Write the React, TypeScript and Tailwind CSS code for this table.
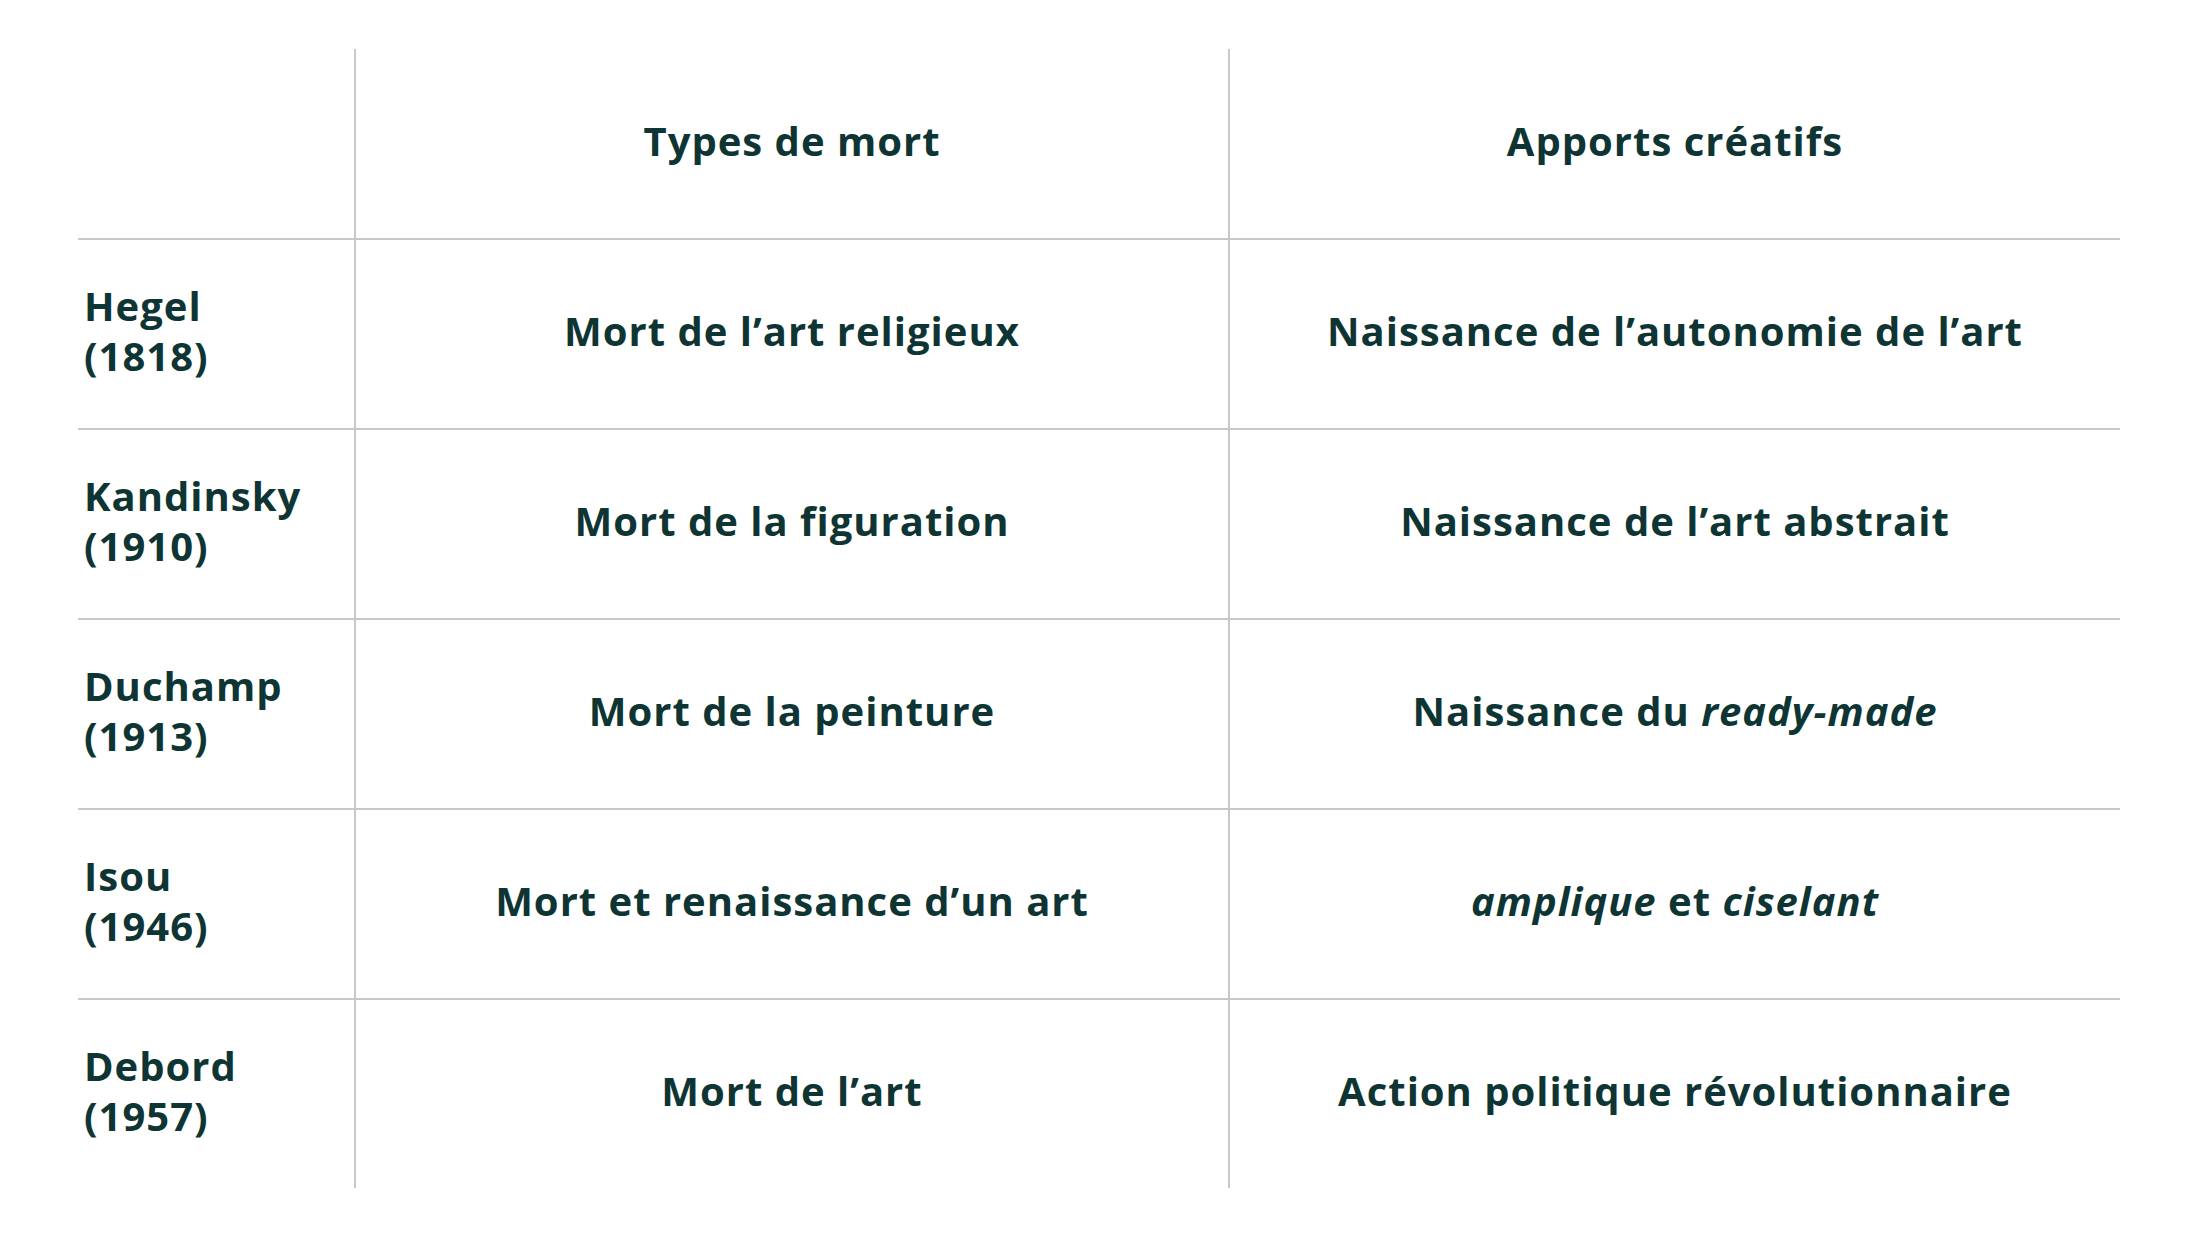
import React from "react";

type Row = { name: string; year: string; mort: React.ReactNode; apport: React.ReactNode };

const rows: Row[] = [
  { name: "Hegel", year: "(1818)", mort: "Mort de l’art religieux", apport: "Naissance de l’autonomie de l’art" },
  { name: "Kandinsky", year: "(1910)", mort: "Mort de la figuration", apport: "Naissance de l’art abstrait" },
  {
    name: "Duchamp",
    year: "(1913)",
    mort: "Mort de la peinture",
    apport: (
      <>
        Naissance du <em className="italic">ready-made</em>
      </>
    ),
  },
  {
    name: "Isou",
    year: "(1946)",
    mort: "Mort et renaissance d’un art",
    apport: (
      <>
        <em className="italic">amplique</em> et <em className="italic">ciselant</em>
      </>
    ),
  },
  { name: "Debord", year: "(1957)", mort: "Mort de l’art", apport: "Action politique révolutionnaire" },
];

export default function App() {
  return (
    <div
      className="w-[2200px] h-[1238px] bg-white pt-[49px] pl-[78px] text-[#0e3533] font-bold tracking-[1px]"
      style={{ fontFamily: '"Open Sans", "Liberation Sans", sans-serif' }}
    >
      <div className="grid grid-cols-[278px_874px_890px] grid-rows-[189px_repeat(5,190px)] w-[2042px]">
        <div className="border-r-2 border-[#c8c8c8]" />
        <div className="border-r-2 border-[#c8c8c8] flex items-center justify-center pb-[6px] text-[40px] leading-[50px]">
          Types de mort
        </div>
        <div className="flex items-center justify-center pb-[6px] text-[40px] leading-[50px]">Apports créatifs</div>
        {rows.map((r) => (
          <React.Fragment key={r.name}>
            <div className="border-t-2 border-r-2 border-[#c8c8c8] flex flex-col justify-center pl-[6px] pb-[6px] text-[40px] leading-[50px]">
              <span>{r.name}</span>
              <span>{r.year}</span>
            </div>
            <div className="border-t-2 border-r-2 border-[#c8c8c8] flex items-center justify-center pb-[6px] text-[40px] leading-[50px]">
              <span>{r.mort}</span>
            </div>
            <div className="border-t-2 border-[#c8c8c8] flex items-center justify-center pb-[6px] text-[40px] leading-[50px]">
              <span>{r.apport}</span>
            </div>
          </React.Fragment>
        ))}
      </div>
    </div>
  );
}
